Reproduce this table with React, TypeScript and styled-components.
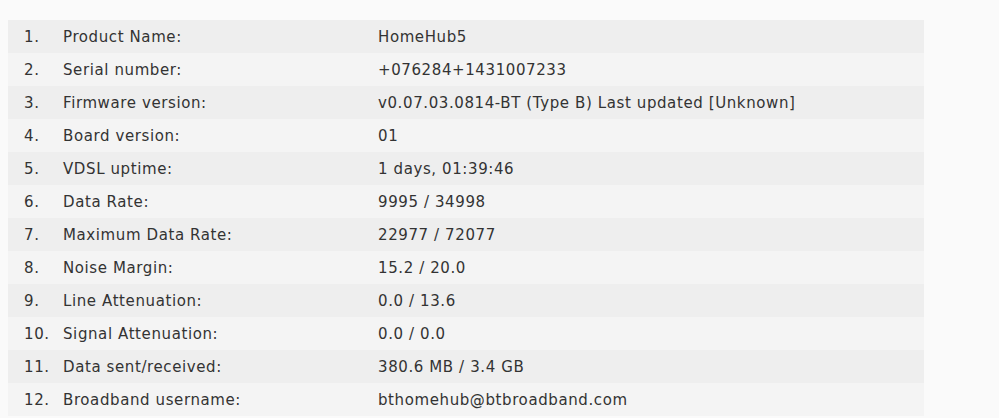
import React from "react";
import styled, { createGlobalStyle } from "styled-components";

const Global = createGlobalStyle`
  html, body { margin: 0; padding: 0; background: #fafafa; }
  body { font-family: "DejaVu Sans", Verdana, sans-serif; color: #333; }
`;

const Page = styled.div`
  padding: 20px 75px 0 8px;
`;

const Table = styled.div`
  display: flex;
  flex-direction: column;
  width: 916px;
`;

const Row = styled.div<{ $odd: boolean }>`
  display: grid;
  grid-template-columns: 55px 315px 1fr;
  align-items: center;
  height: 33px;
  background: ${(p) => (p.$odd ? "#eeeeee" : "#f4f4f4")};
  font-size: 15px;
  letter-spacing: 0.6px;
`;

const Num = styled.span`
  padding-left: 16px;
`;

const Label = styled.span``;

const Value = styled.span``;

const rows: [string, string][] = [
  ["Product Name:", "HomeHub5"],
  ["Serial number:", "+076284+1431007233"],
  ["Firmware version:", "v0.07.03.0814-BT (Type B) Last updated [Unknown]"],
  ["Board version:", "01"],
  ["VDSL uptime:", "1 days, 01:39:46"],
  ["Data Rate:", "9995 / 34998"],
  ["Maximum Data Rate:", "22977 / 72077"],
  ["Noise Margin:", "15.2 / 20.0"],
  ["Line Attenuation:", "0.0 / 13.6"],
  ["Signal Attenuation:", "0.0 / 0.0"],
  ["Data sent/received:", "380.6 MB / 3.4 GB"],
  ["Broadband username:", "bthomehub@btbroadband.com"],
];

export default function App() {
  return (
    <Page>
      <Global />
      <Table>
        {rows.map(([l, v], i) => (
          <Row key={i} $odd={i % 2 === 0}>
            <Num>{i + 1}.</Num>
            <Label>{l}</Label>
            <Value>{v}</Value>
          </Row>
        ))}
      </Table>
    </Page>
  );
}
